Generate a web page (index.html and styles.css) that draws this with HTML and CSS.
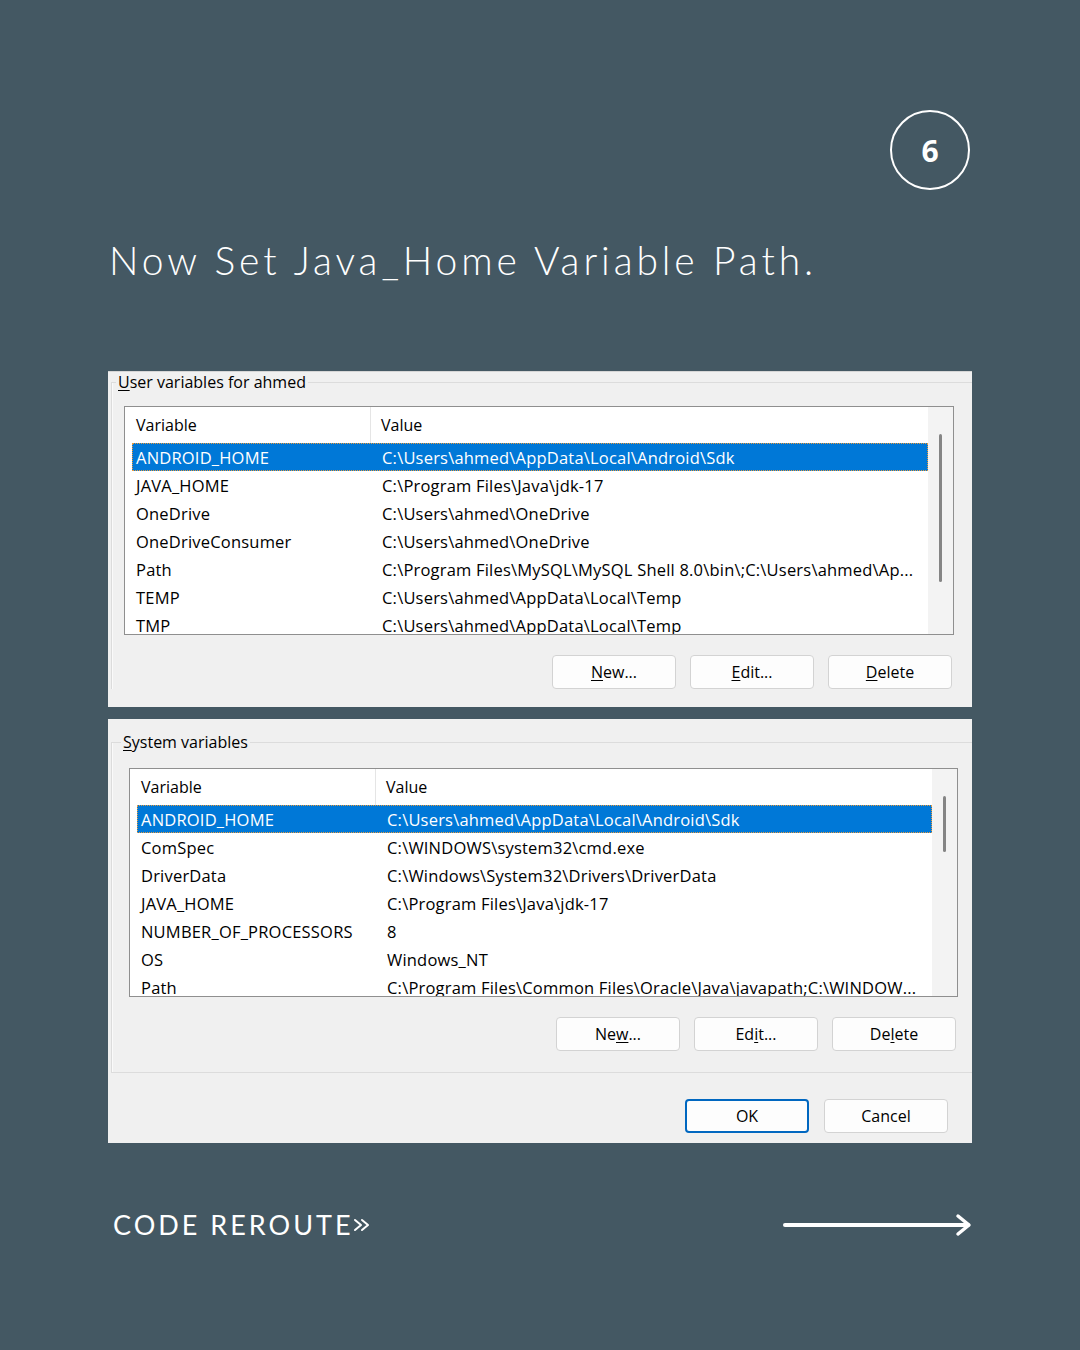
FILE: index.html
```html
<!DOCTYPE html>
<html lang="en">
<head>
<meta charset="utf-8">
<title>Now Set Java_Home Variable Path</title>
<link rel="stylesheet" href="styles.css">
</head>
<body>
<div class="page">
  <div class="badge-row"><div class="badge">6</div></div>
  <h1 class="title">Now Set Java_Home Variable Path.</h1>

  <div class="dialog">
    <section class="panel panel-user">
      <fieldset class="group group-user">
        <legend class="group-label"><u>U</u>ser variables for ahmed</legend>
        <div class="list">
          <div class="list-main">
            <div class="list-head"><div class="h-var">Variable</div><div class="h-val">Value</div></div>
            <div class="rows">
              <div class="row sel"><span class="c-var">ANDROID_HOME</span><span class="c-val">C:\Users\ahmed\AppData\Local\Android\Sdk</span></div>
              <div class="row"><span class="c-var">JAVA_HOME</span><span class="c-val">C:\Program Files\Java\jdk-17</span></div>
              <div class="row"><span class="c-var">OneDrive</span><span class="c-val">C:\Users\ahmed\OneDrive</span></div>
              <div class="row"><span class="c-var">OneDriveConsumer</span><span class="c-val">C:\Users\ahmed\OneDrive</span></div>
              <div class="row"><span class="c-var">Path</span><span class="c-val">C:\Program Files\MySQL\MySQL Shell 8.0\bin\;C:\Users\ahmed\Ap...</span></div>
              <div class="row"><span class="c-var">TEMP</span><span class="c-val">C:\Users\ahmed\AppData\Local\Temp</span></div>
              <div class="row"><span class="c-var">TMP</span><span class="c-val">C:\Users\ahmed\AppData\Local\Temp</span></div>
            </div>
          </div>
          <div class="scrollbar"><div class="thumb thumb-user"></div></div>
        </div>
        <div class="btns btns-user">
          <button class="btn"><u>N</u>ew...</button>
          <button class="btn"><u>E</u>dit...</button>
          <button class="btn"><u>D</u>elete</button>
        </div>
      </fieldset>
    </section>

    <section class="panel panel-system">
      <fieldset class="group group-system">
        <legend class="group-label"><u>S</u>ystem variables</legend>
        <div class="list">
          <div class="list-main">
            <div class="list-head"><div class="h-var">Variable</div><div class="h-val">Value</div></div>
            <div class="rows">
              <div class="row sel"><span class="c-var">ANDROID_HOME</span><span class="c-val">C:\Users\ahmed\AppData\Local\Android\Sdk</span></div>
              <div class="row"><span class="c-var">ComSpec</span><span class="c-val">C:\WINDOWS\system32\cmd.exe</span></div>
              <div class="row"><span class="c-var">DriverData</span><span class="c-val">C:\Windows\System32\Drivers\DriverData</span></div>
              <div class="row"><span class="c-var">JAVA_HOME</span><span class="c-val">C:\Program Files\Java\jdk-17</span></div>
              <div class="row"><span class="c-var">NUMBER_OF_PROCESSORS</span><span class="c-val">8</span></div>
              <div class="row"><span class="c-var">OS</span><span class="c-val">Windows_NT</span></div>
              <div class="row"><span class="c-var">Path</span><span class="c-val">C:\Program Files\Common Files\Oracle\Java\javapath;C:\WINDOW...</span></div>
            </div>
          </div>
          <div class="scrollbar"><div class="thumb thumb-system"></div></div>
        </div>
        <div class="btns btns-system">
          <button class="btn">Ne<u>w</u>...</button>
          <button class="btn">Ed<u>i</u>t...</button>
          <button class="btn">De<u>l</u>ete</button>
        </div>
      </fieldset>
      <div class="dialog-actions">
        <button class="btn btn-ok">OK</button>
        <button class="btn">Cancel</button>
      </div>
    </section>
  </div>

  <footer class="footer">
    <div class="brand">CODE REROUTE<svg class="chev" viewBox="0 0 18 14" width="18" height="14" aria-hidden="true"><path d="M2 2 L8 7 L2 12 M9 2 L15 7 L9 12" fill="none" stroke="#fff" stroke-width="2" stroke-linecap="round" stroke-linejoin="round"/></svg></div>
    <svg class="arrow" viewBox="0 0 192 24" width="192" height="24" aria-hidden="true"><path d="M3 12 H186" stroke="#fff" stroke-width="4" stroke-linecap="round"/><path d="M176 3 L187 12 L176 21" fill="none" stroke="#fff" stroke-width="3.5" stroke-linecap="round" stroke-linejoin="round"/></svg>
  </footer>
</div>
</body>
</html>
```

FILE: styles.css
```css
* { box-sizing: border-box; }
html, body { margin: 0; padding: 0; }
body {
  background: #445863;
  font-family: "Open Sans", "Noto Sans", sans-serif;
}
.page {
  width: 1080px;
  height: 1350px;
  padding-top: 110px;
  overflow: hidden;
}
.badge-row {
  display: flex;
  justify-content: flex-end;
  padding-right: 110px;
}
.badge {
  width: 80px;
  height: 80px;
  border: 2px solid #fff;
  border-radius: 50%;
  display: flex;
  align-items: center;
  justify-content: center;
  color: #fff;
  font-family: "Open Sans", sans-serif;
  font-weight: 700;
  font-size: 30px;
}
.title {
  margin: 46px 0 0 109px;
  color: #fff;
  font-family: "Lato", sans-serif;
  font-weight: 300;
  font-size: 39px;
  line-height: 48px;
  letter-spacing: 3.9px;
  white-space: nowrap;
}

.dialog {
  margin: 87px 108px 0;
  width: 864px;
  display: flex;
  flex-direction: column;
  gap: 12px;
  font-family: "Open Sans", "Noto Sans", sans-serif;
  font-size: 16px;
  color: #000;
}
.panel {
  background: #f0f0f0;
  overflow: hidden;
}
.panel-user {
  height: 336px;
  border-top: 1px solid #d6d6d6;
}
.panel-system {
  height: 424px;
  padding-top: 13px;
}
.group {
  margin: 0 0 0 3px;
  min-width: 0;
  border: 1px solid #dcdcdc;
  border-right: 0;
  box-shadow: inset 1px 0 #fafafa;
}
.group-user {
  border-bottom: 0;
  padding: 14px 18px 0 12px;
}
.group-system {
  padding: 16px 14px 21px 17px;
}
.group-label {
  padding: 0 2px;
  margin-left: -8px;
  line-height: 20px;
}
.list {
  display: flex;
  height: 229px;
  background: #fff;
  border: 1px solid #8f8f8f;
  overflow: hidden;
}
.list-main {
  flex: 1;
  min-width: 0;
}
.list-head {
  display: flex;
  height: 36px;
  align-items: stretch;
}
.h-var {
  width: 246px;
  padding-left: 11px;
  display: flex;
  align-items: center;
  border-right: 1px solid #e5e5e5;
}
.h-val {
  padding-left: 10px;
  display: flex;
  align-items: center;
}
.rows {
  padding-left: 7px;
  font-size: 16.5px;
  letter-spacing: 0.2px;
}
.row {
  display: flex;
  height: 28px;
  align-items: center;
  white-space: nowrap;
}
.row.sel {
  background: #0078d7;
  color: #fff;
  outline: 1px dotted #e89a3c;
  outline-offset: -1px;
}
.c-var {
  width: 246px;
  padding-left: 4px;
}
.c-val {
  padding-left: 4px;
}
.scrollbar {
  width: 25px;
  background: #f3f3f3;
  position: relative;
}
.thumb {
  position: absolute;
  left: 11px;
  width: 3px;
  background: #858585;
  border-radius: 2px;
}
.thumb-user { top: 27px; height: 148px; }
.thumb-system { top: 27px; height: 56px; }

.btns {
  display: flex;
  justify-content: flex-end;
  gap: 14px;
  margin-top: 20px;
  padding-right: 2px;
}
.btn {
  width: 124px;
  height: 34px;
  background: #fdfdfd;
  border: 1px solid #d3d3d3;
  border-radius: 4px;
  font-family: "Open Sans", "Noto Sans", sans-serif;
  font-size: 16px;
  color: #000;
  padding: 0;
}
.btn u { text-underline-offset: 2px; }
.group-label u { text-underline-offset: 2px; }
.dialog-actions {
  display: flex;
  justify-content: flex-end;
  gap: 15px;
  padding: 26px 24px 0 0;
}
.btn-ok {
  border: 2px solid #0067c0;
}

.footer {
  margin: 65px 108px 0 113px;
  display: flex;
  justify-content: space-between;
  align-items: center;
}
.brand {
  color: #fff;
  font-family: "Lato", sans-serif;
  font-weight: 400;
  font-size: 27px;
  letter-spacing: 3px;
  display: flex;
  align-items: center;
}
.chev { margin-left: -1px; }
.arrow { margin-right: -2px; }
```
